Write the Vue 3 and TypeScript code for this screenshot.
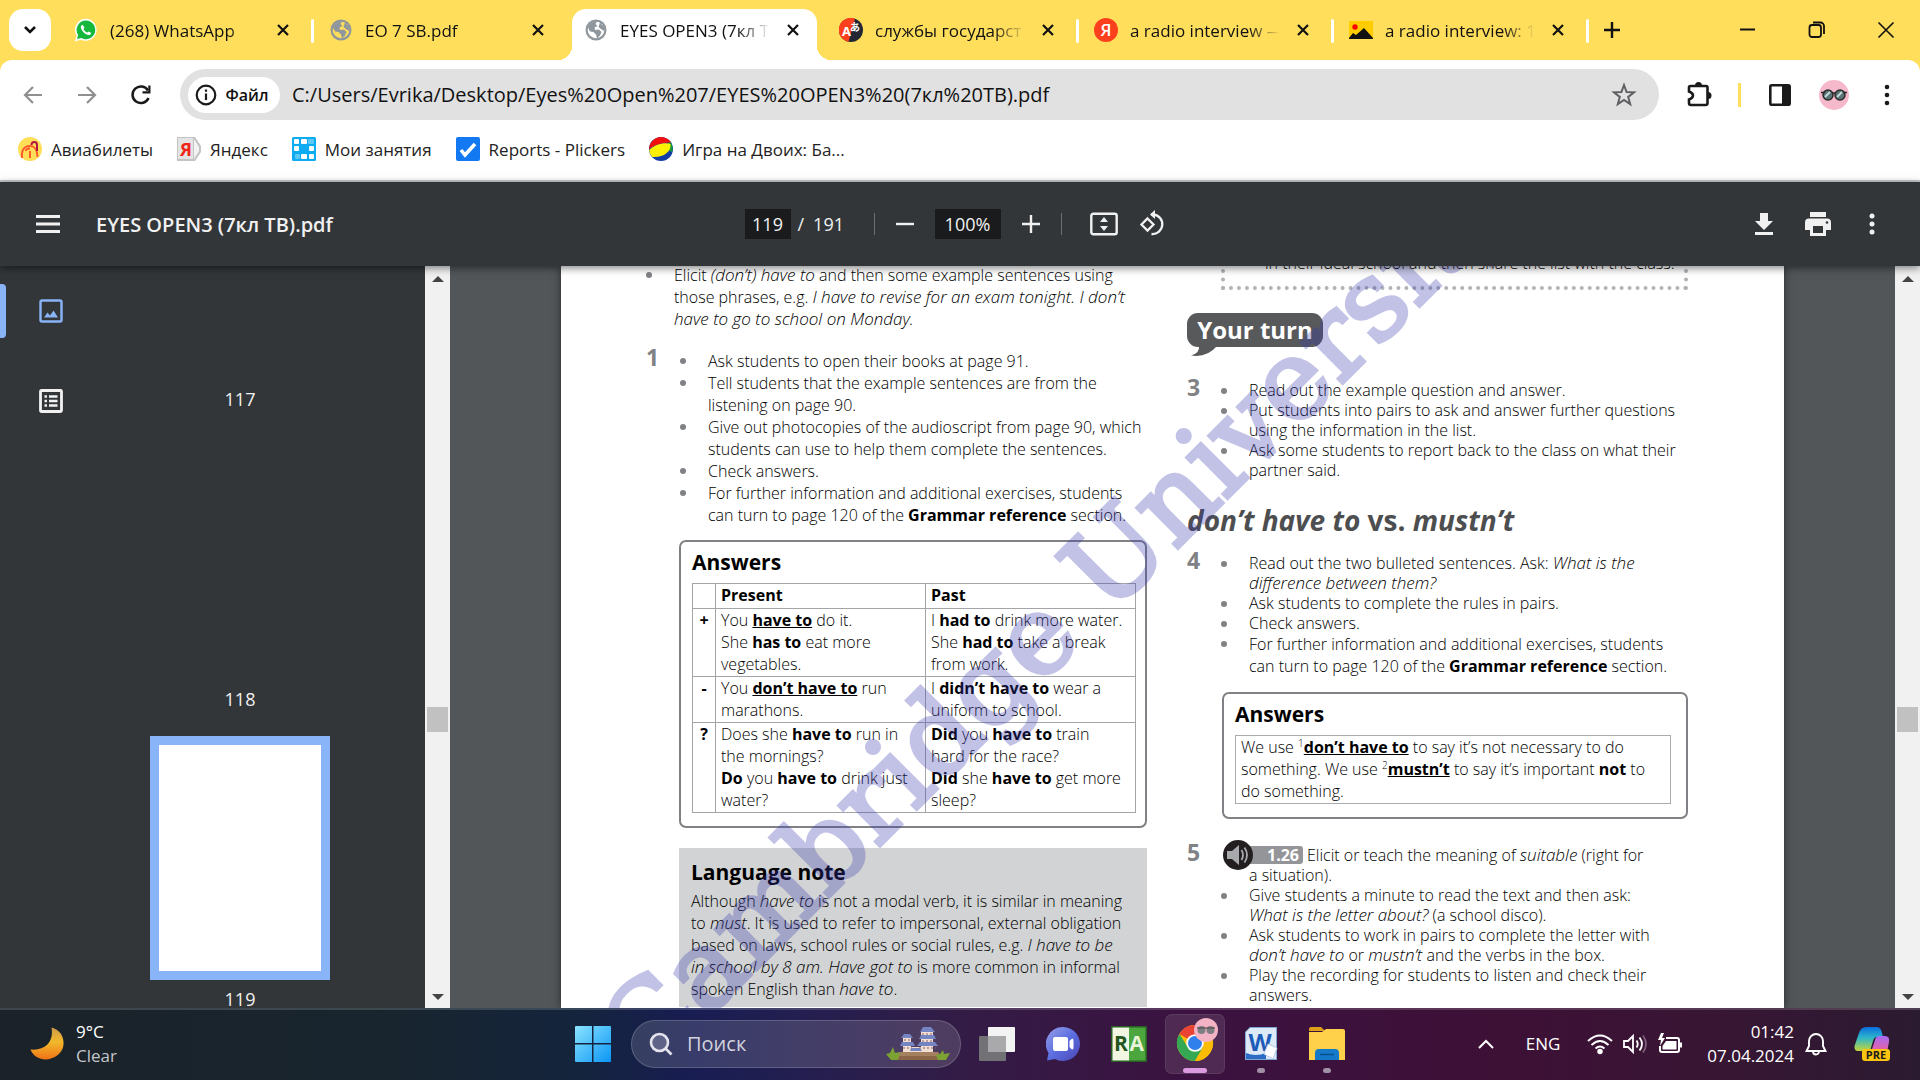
<script setup lang="ts">
import { ref } from 'vue'

interface Tab {
  icon: string
  title: string
  active?: boolean
  divider?: boolean
}

interface Bookmark {
  icon: string
  label: string
}

const tabs: Tab[] = [
  { icon: 'whatsapp', title: '(268) WhatsApp', divider: true },
  { icon: 'globe', title: 'EO 7 SB.pdf' },
  { icon: 'globe', title: 'EYES OPEN3 (7кл Т', active: true },
  { icon: 'translate', title: 'службы государст', divider: true },
  { icon: 'yandex', title: 'a radio interview —', divider: true },
  { icon: 'picture', title: 'a radio interview: 1', divider: true },
]

const bookmarks: Bookmark[] = [
  { icon: 'avia', label: 'Авиабилеты' },
  { icon: 'ya', label: 'Яндекс' },
  { icon: 'lessons', label: 'Мои занятия' },
  { icon: 'plickers', label: 'Reports - Plickers' },
  { icon: 'ball', label: 'Игра на Двоих: Ба...' },
]

const thumbs = [
  { page: 118, selected: false },
  { page: 119, selected: true },
]

const url = ref('C:/Users/Evrika/Desktop/Eyes%20Open%207/EYES%20OPEN3%20(7кл%20ТВ).pdf')
const pageNumber = ref('119')
const zoomLevel = ref('100%')
const query = ref('')
</script>

<template>
  <div class="screen">
    <header class="tabstrip">
      <button class="tab-search" aria-label="Search tabs">
        <svg width="14" height="10" viewBox="0 0 14 10"><path d="M2 2l5 5 5-5" fill="none" stroke="#111" stroke-width="2.6" /></svg>
      </button>
      <div v-for="(tab, i) in tabs" :key="i" class="tab" :class="{ active: tab.active, divider: tab.divider }">
        <svg v-if="tab.icon === 'whatsapp'" class="fav" viewBox="0 0 24 24">
          <path d="M12 .8A11 11 0 0 0 2.600 17.600L.8 23.400l6-1.700A11 11 0 1 0 12 .8z" fill="#fff" />
          <path d="M12 2.600a9.300 9.300 0 0 0-7.800 14.400L3 21l4.200-1.100A9.300 9.300 0 1 0 12 2.600z" fill="#16b83c" />
          <path d="M8.600 6.800c-1.600.5-2.200 2-1.500 3.800 1 2.800 3.300 5.200 6.200 6.200 1.900.6 3.600-.1 3.900-1.900l-2.600-1.500-1.300 1.200c-1.700-.7-3-2-3.800-3.700l1-1.300z" fill="#fff" />
        </svg>
        <svg v-else-if="tab.icon === 'globe'" class="fav" viewBox="0 0 24 24">
          <circle cx="12" cy="12" r="10.500" fill="#8f969c" />
          <circle cx="12" cy="12" r="8.300" :fill="tab.active ? '#fff' : '#ffde5c'" />
          <path d="M4 9.500C5 5.500 9 3 13 3.500l-1.500 2.500 2 2-3 1.500.5 2.500 4-.5 2.500 2.500-1.500 3.500-3 3-1-4-2.500-2.500-3.500-.5z" fill="#8f969c" />
          <path d="M16 4.500l4 4.500v4l-3-2-2.500-2z" fill="#8f969c" />
        </svg>
        <svg v-else-if="tab.icon === 'translate'" class="fav" viewBox="0 0 24 24">
          <circle cx="12" cy="12" r="12" fill="#222733" />
          <path d="M16 .7A12 12 0 1 0 9.500 23.700z" fill="#fc3f1d" />
          <text x="3" y="18" font-size="13" font-weight="700" fill="#fff">A</text>
          <text class="cjk" x="11" y="13" font-size="10" font-weight="700" fill="#fff">あ</text>
        </svg>
        <svg v-else-if="tab.icon === 'yandex'" class="fav" viewBox="0 0 24 24">
          <circle cx="12" cy="12" r="12" fill="#fc3f1d" />
          <text x="12" y="18" font-size="17" font-weight="600" text-anchor="middle" fill="#fff">Я</text>
        </svg>
        <svg v-else class="fav" viewBox="0 0 24 24">
          <path d="M0 3h24v18H0z" fill="#fc0" />
          <circle cx="6" cy="9" r="2.700" fill="#f00" />
          <path d="M0 21v-1l4-5 3 2 8-7 9 10v1z" fill="#111" />
        </svg>
        <button class="tab-title">{{ tab.title }}</button>
        <button class="tab-close" aria-label="Close tab">
          <svg width="14" height="14" viewBox="0 0 14 14"><path d="M2 2l10 10M12 2L2 12" stroke="#111" stroke-width="2.200" /></svg>
        </button>
      </div>
      <button class="new-tab" aria-label="New tab">
        <svg width="16" height="16" viewBox="0 0 16 16"><path d="M8 0v16M0 8h16" stroke="#111" stroke-width="2.400" /></svg>
      </button>
      <div class="window-controls">
        <button aria-label="Minimize"><svg width="18" height="18" viewBox="0 0 18 18"><path d="M1 8.500h15" stroke="#111" stroke-width="2" /></svg></button>
        <button aria-label="Restore">
          <svg width="18" height="18" viewBox="0 0 18 18" fill="none" stroke="#111" stroke-width="1.800"><rect x="1.500" y="4" width="11.500" height="12" rx="2.500" /><path d="M5 1.500h7.500a3.500 3.500 0 0 1 3.500 3.500v8" /></svg>
        </button>
        <button aria-label="Close"><svg width="18" height="18" viewBox="0 0 18 18"><path d="M1.500 1.500l15 15M16.500 1.500l-15 15" stroke="#111" stroke-width="1.600" /></svg></button>
      </div>
    </header>

    <div class="toolbar-wrap">
      <div class="toolbar">
        <nav class="nav-buttons">
          <button aria-label="Back"><svg width="20" height="20" viewBox="0 0 20 20" fill="none" stroke="#8f8f8f" stroke-width="2.200"><path d="M19 10H2M10 2l-8 8 8 8" /></svg></button>
          <button aria-label="Forward"><svg width="20" height="20" viewBox="0 0 20 20" fill="none" stroke="#8f8f8f" stroke-width="2.200"><path d="M1 10h17M10 2l8 8-8 8" /></svg></button>
          <button aria-label="Reload">
            <svg width="22" height="22" viewBox="0 0 22 22"><path d="M18.500 14A8.300 8.300 0 1 1 18 6.500" fill="none" stroke="#1a1a1a" stroke-width="2.500" /><path d="M20.500 1.500v8h-8V7.200h5.800V1.500z" fill="#1a1a1a" /></svg>
          </button>
        </nav>
        <div class="omnibox">
          <button class="chip">
            <svg width="22" height="22" viewBox="0 0 22 22"><circle cx="11" cy="11" r="9.300" fill="none" stroke="#1a1a1a" stroke-width="2.200" /><path d="M11 9.500v6.500M11 5.500v2.200" stroke="#1a1a1a" stroke-width="2.200" /></svg>
            Файл
          </button>
          <input v-model="url" class="url" type="text" aria-label="Address" />
          <button class="star" aria-label="Bookmark this page">
            <svg width="26" height="26" viewBox="0 0 26 26"><path d="M13 3l2.600 7 7.400.3-5.800 4.600 2 7.200L13 18l-6.200 4.100 2-7.200L3 10.300l7.400-.3z" fill="none" stroke="#5f6063" stroke-width="2" /></svg>
          </button>
        </div>
        <div class="tools">
          <button class="ext" aria-label="Extensions">
            <svg width="28" height="28" viewBox="0 0 28 28"><path d="M4 6.500Q4 5 5.500 5H21Q22.500 5 22.500 6.500V22Q22.500 24 20.500 24H6Q4 24 4 22V18.500Q8 17 8 14.500T4 10.500z" fill="none" stroke="#1a1a1a" stroke-width="2.600" /><path d="M10 4.500a3.500 3.500 0 0 1 7 0zM23 11a3.500 3.500 0 0 1 0 7z" fill="#1a1a1a" /></svg>
          </button>
          <span class="tool-divider"></span>
          <button class="panel" aria-label="Side panel">
            <svg width="22" height="22" viewBox="0 0 22 22"><rect x="1.300" y="1.300" width="19.400" height="19.400" rx="1.500" fill="none" stroke="#1a1a1a" stroke-width="2.600" /><path d="M13 1h8v20h-8z" fill="#1a1a1a" /></svg>
          </button>
          <button class="profile" aria-label="Profile">
            <svg width="30" height="30" viewBox="0 0 30 30"><circle cx="15" cy="15" r="15" fill="#f6b8cb" /><g fill="#5c7478" stroke="#2a2a2a" stroke-width="1.500"><circle cx="9" cy="15" r="5" /><circle cx="21" cy="15" r="5" /></g><path d="M2 12.500h4M24 12.500h4M13 13h4" stroke="#2a2a2a" stroke-width="1.500" /><path d="M6 17l5-5M18 17l5-5" stroke="#c6dcda" stroke-width="1.800" /></svg>
          </button>
          <button class="more" aria-label="Menu">
            <svg width="6" height="22" viewBox="0 0 6 22" fill="#1a1a1a"><circle cx="3" cy="3" r="2.300" /><circle cx="3" cy="11" r="2.300" /><circle cx="3" cy="19" r="2.300" /></svg>
          </button>
        </div>
      </div>
      <nav class="bookmarks">
        <a v-for="b in bookmarks" :key="b.label" href="#">
          <svg v-if="b.icon === 'avia'" viewBox="0 0 24 24"><ellipse cx="12" cy="12" rx="12" ry="12" fill="#ffdf57" /><path d="M4 21c-1-9 3-12 8-12s7 3 7.500 11M12 21v-7M8 14c0-2 1-2.500 4-2.500" fill="none" stroke="#ff5a2b" stroke-width="2" /><path d="M13.500 8c0-4 5.500-4 5.500 0v6" fill="none" stroke="#b31245" stroke-width="2" /></svg>
          <svg v-else-if="b.icon === 'ya'" viewBox="0 0 24 24"><path d="M0 0h18l6 9v6l-6 9H0z" fill="#c4c4c4" /><path d="M1 1h15v21H1z" fill="#e4e4e4" /><path d="M17 2l5 8v4l-5 8z" fill="#f3f3f3" /><text x="9" y="19" font-size="18" font-weight="700" text-anchor="middle" fill="#f0251a">Я</text></svg>
          <svg v-else-if="b.icon === 'lessons'" viewBox="0 0 24 24"><rect width="24" height="24" rx="1.500" fill="#0cabf2" /><g fill="#fff"><rect x="2" y="2" width="5" height="5" rx="1" /><rect x="9" y="2" width="6" height="5" rx="1" /><rect x="16" y="2" width="6" height="5" rx="1" fill="#5cc8f7" /><rect x="9" y="9" width="6" height="5" rx="1" fill="#0cabf2" /><rect x="2" y="9" width="5" height="5" rx="1" /><rect x="17" y="9" width="5" height="5" rx="1" /><rect x="3" y="17" width="5" height="5" rx="1" fill="#5cc8f7" /><rect x="9" y="17" width="6" height="5" rx="1" /><rect x="17" y="17" width="5" height="5" rx="1" /></g></svg>
          <svg v-else-if="b.icon === 'plickers'" viewBox="0 0 24 24"><rect width="24" height="24" rx="2" fill="#1279f2" /><path d="M5 13l4 5 10-11" fill="none" stroke="#fff" stroke-width="3.600" /></svg>
          <svg v-else viewBox="0 0 24 24"><circle cx="12" cy="12" r="12" fill="#113fa5" /><path d="M21 4a12 12 0 0 1 2 11l-8-4z" fill="#159a3c" /><path d="M0 12A12 12 0 0 1 22 5.500C14 5 5 8 0 12z" fill="#f50e0e" /><path d="M.2 13C5 8 15 5 21.500 7c1 8-8 14-18 13C1.500 18 .5 16 .2 13z" fill="#ffef00" /></svg>
          {{ b.label }}
        </a>
      </nav>
    </div>

    <section class="pdf-bar">
      <div class="pdf-left">
        <button aria-label="Menu"><svg width="24" height="18" viewBox="0 0 24 18"><path d="M0 1.500h24M0 9h24M0 16.500h24" stroke="#f1f1f1" stroke-width="3" /></svg></button>
        <h1>EYES OPEN3 (7кл ТВ).pdf</h1>
      </div>
      <div class="pdf-mid">
        <input v-model="pageNumber" class="box page-no" type="text" aria-label="Page number" />
        <span class="total"><span>/</span><span>191</span></span>
        <span class="bar-divider first"></span>
        <button class="minus" aria-label="Zoom out"><svg width="18" height="18" viewBox="0 0 18 18"><path d="M0 9h18" stroke="#f1f1f1" stroke-width="2.400" /></svg></button>
        <input v-model="zoomLevel" class="box zoom" type="text" aria-label="Zoom level" />
        <button class="plus" aria-label="Zoom in"><svg width="18" height="18" viewBox="0 0 18 18"><path d="M0 9h18M9 0v18" stroke="#f1f1f1" stroke-width="2.400" /></svg></button>
        <span class="bar-divider"></span>
        <button class="fit" aria-label="Fit to page">
          <svg width="28" height="24" viewBox="0 0 28 24"><rect x="1.300" y="1.800" width="25.400" height="20.400" rx="2" fill="none" stroke="#f1f1f1" stroke-width="2.400" /><path d="M14 5l4 5h-8zM14 19l4-5h-8z" fill="#f1f1f1" /></svg>
        </button>
        <button aria-label="Rotate">
          <svg width="28" height="28" viewBox="0 0 28 28" fill="none" stroke="#f1f1f1" stroke-width="2.300"><path d="M8.500 8.500l6 6-6 6-6-6z" /><path d="M12 4.500h2.500a9.800 9.800 0 1 1-2 19.500" /><path d="M16 0v9l-5-4.500z" fill="#f1f1f1" stroke="none" /></svg>
        </button>
      </div>
      <div class="pdf-right">
        <button aria-label="Download"><svg width="20" height="24" viewBox="0 0 20 24" fill="#f1f1f1"><path d="M6 1h8v8h5l-9 9-9-9h5zM1 20h18v3H1z" /></svg></button>
        <button aria-label="Print"><svg width="26" height="24" viewBox="0 0 26 24"><path d="M5 0h16v5H5zM4 6.500h18a4 4 0 0 1 4 4V18h-5v6H5v-6H0v-7.500a4 4 0 0 1 4-4z" fill="#f1f1f1" /><path d="M8 14h10v7H8z" fill="#323639" /><circle cx="22" cy="10.500" r="1.300" fill="#323639" /></svg></button>
        <button aria-label="More"><svg width="6" height="22" viewBox="0 0 6 22" fill="#f1f1f1"><circle cx="3" cy="3" r="2.500" /><circle cx="3" cy="11" r="2.500" /><circle cx="3" cy="19" r="2.500" /></svg></button>
      </div>
    </section>

    <main class="viewer">
      <aside class="sidebar">
        <div class="rail">
          <button class="rail-item selected" aria-label="Thumbnails">
            <svg width="24" height="24" viewBox="0 0 24 24"><rect x="1.500" y="1.500" width="21" height="21" rx="1.500" fill="none" stroke="#8ab4f8" stroke-width="2.400" /><path d="M5 18.500l3.500-5 2.500 3 3.500-5 4.500 7z" fill="#8ab4f8" /></svg>
          </button>
          <button class="rail-item" aria-label="Document outline">
            <svg width="24" height="24" viewBox="0 0 24 24"><rect x="1.500" y="1.500" width="21" height="21" rx="1" fill="none" stroke="#f1f1f1" stroke-width="2.800" /><path d="M5.500 7.500H8M10 7.500h8.500M5.500 12H8M10 12h8.500M5.500 16.500H8M10 16.500h8.500" stroke="#f1f1f1" stroke-width="2.300" /></svg>
          </button>
        </div>
        <div class="thumbs">
          <span class="thumb-label">117</span>
          <figure v-for="t in thumbs" :key="t.page">
            <div class="thumb" :class="{ selected: t.selected }"></div>
            <figcaption class="thumb-label">{{ t.page }}</figcaption>
          </figure>
        </div>
        <div class="scrollbar"><i class="up"></i><i class="handle"></i><i class="down"></i></div>
      </aside>

      <div class="canvas">
        <article class="page">
          <div class="column">
            <ul class="intro">
              <li><span>Elicit <em>(don’t) have to</em> and then some example sentences using<br />those phrases, e.g. <em>I have to revise for an exam tonight. I don’t<br />have to go to school on Monday.</em></span></li>
            </ul>
            <section class="task">
              <b class="num">1</b>
              <ul>
                <li><span>Ask students to open their books at page 91.</span></li>
                <li><span>Tell students that the example sentences are from the<br />listening on page 90.</span></li>
                <li><span>Give out photocopies of the audioscript from page 90, which<br />students can use to help them complete the sentences.</span></li>
                <li><span>Check answers.</span></li>
                <li><span>For further information and additional exercises, students<br />can turn to page 120 of the <b>Grammar reference</b> section.</span></li>
              </ul>
            </section>
            <section class="answers left">
              <h3>Answers</h3>
              <table>
                <thead>
                  <tr><th></th><th>Present</th><th>Past</th></tr>
                </thead>
                <tbody>
                  <tr>
                    <th>+</th>
                    <td>You <u>have to</u> do it.<br />She <b>has to</b> eat more<br />vegetables.</td>
                    <td>I <b>had to</b> drink more water.<br />She <b>had to</b> take a break<br />from work.</td>
                  </tr>
                  <tr>
                    <th>-</th>
                    <td>You <u>don’t have to</u> run<br />marathons.</td>
                    <td>I <b>didn’t have to</b> wear a<br />uniform to school.</td>
                  </tr>
                  <tr>
                    <th>?</th>
                    <td>Does she <b>have to</b> run in<br />the mornings?<br /><b>Do</b> you <b>have to</b> drink just<br />water?</td>
                    <td><b>Did</b> you <b>have to</b> train<br />hard for the race?<br /><b>Did</b> she <b>have to</b> get more<br />sleep?</td>
                  </tr>
                </tbody>
              </table>
            </section>
            <section class="note">
              <h3>Language note</h3>
              <p>Although <em>have to</em> is not a modal verb, it is similar in meaning<br />to <em>must</em>. It is used to refer to impersonal, external obligation<br />based on laws, school rules or social rules, e.g. <em>I have to be<br />in school by 8 am. Have got to</em> is more common in informal<br />spoken English than <em>have to</em>.</p>
            </section>
          </div>

          <div class="column second">
            <p class="dotted">in their ideal school and then share the list with the class.</p>
            <div class="bubble">
              <h2>Your turn</h2>
              <svg class="tail" width="26" height="12" viewBox="0 0 26 12"><path d="M8 0h18Q16 12 0 9.500Q9 7 8 0z" fill="#58595b" /></svg>
            </div>
            <section class="task tight">
              <b class="num">3</b>
              <ul>
                <li><span>Read out the example question and answer.</span></li>
                <li><span>Put students into pairs to ask and answer further questions<br />using the information in the list.</span></li>
                <li><span>Ask some students to report back to the class on what their<br />partner said.</span></li>
              </ul>
            </section>
            <h2 class="topic"><em>don’t have to</em> vs. <em>mustn’t</em></h2>
            <section class="task tight">
              <b class="num">4</b>
              <ul>
                <li><span>Read out the two bulleted sentences. Ask: <em>What is the<br />difference between them?</em></span></li>
                <li><span>Ask students to complete the rules in pairs.</span></li>
                <li><span>Check answers.</span></li>
                <li class="loose"><span>For further information and additional exercises, students<br />can turn to page 120 of the <b>Grammar reference</b> section.</span></li>
              </ul>
            </section>
            <section class="answers right">
              <h3>Answers</h3>
              <p>We use <sup>1</sup><u>don’t have to</u> to say it’s not necessary to do<br />something. We use <sup>2</sup><u>mustn’t</u> to say it’s important <b>not</b> to<br />do something.</p>
            </section>
            <section class="task tight">
              <b class="num">5</b>
              <ul>
                <li class="audio">
                  <span class="track">
                    <svg width="30" height="30" viewBox="0 0 30 30"><circle cx="15" cy="15" r="15" fill="#231f20" /><path d="M4 11h5l7-6v20l-7-6H4z" fill="#a7a9ac" /><path d="M18.500 10q3 5 0 10M21.500 7.500q5 7.500 0 15" fill="none" stroke="#a7a9ac" stroke-width="1.800" /></svg>
                    <b>1.26</b>
                  </span>
                  <span>Elicit or teach the meaning of <em>suitable</em> (right for</span>
                </li>
                <li class="plain"><span>a situation).</span></li>
                <li><span>Give students a minute to read the text and then ask:<br /><em>What is the letter about?</em> (a school disco).</span></li>
                <li><span>Ask students to work in pairs to complete the letter with<br /><em>don’t have to</em> or <em>mustn’t</em> and the verbs in the box.</span></li>
                <li><span>Play the recording for students to listen and check their<br />answers.</span></li>
              </ul>
            </section>
          </div>
          <div class="watermark">Cambridge University</div>
        </article>
      </div>
      <div class="scrollbar"><i class="up"></i><i class="handle"></i><i class="down"></i></div>
    </main>

    <footer class="taskbar">
      <div class="weather">
        <svg width="36" height="36" viewBox="0 0 36 36"><defs><linearGradient id="moon" x1="0" y1="0" x2="0" y2="1"><stop offset="0" stop-color="#cf9a4a" /><stop offset=".45" stop-color="#f2b92c" /><stop offset="1" stop-color="#ef7316" /></linearGradient></defs><path d="M22.500 1.500C31 4 35 10 34.500 18.500c-.8 15-26 22-33 5C17 25 25 15 22.500 1.500z" fill="url(#moon)" /></svg>
        <p>9°C<br /><span>Clear</span></p>
      </div>
      <div class="apps">
        <button class="app" aria-label="Start">
          <svg width="36" height="36" viewBox="0 0 36 36"><defs><linearGradient id="win" x1="0" y1="0" x2="1" y2="1"><stop offset="0" stop-color="#8be4ff" /><stop offset="1" stop-color="#0a95f5" /></linearGradient></defs><path d="M0 1q0-1 1-1h16v17H0zM18.500 0H35q1 0 1 1v16H18.500zM0 18.500h17V36H1q-1 0-1-1zM18.500 18.500H36V35q0 1-1 1H18.500z" fill="url(#win)" /></svg>
        </button>
        <div class="search">
          <svg width="24" height="24" viewBox="0 0 24 24" fill="none" stroke="#e4e4ee" stroke-width="2.600"><circle cx="10.500" cy="10.500" r="8.500" fill="#5f6388" /><path d="M16.500 16.500l6 6" /></svg>
          <input v-model="query" type="text" placeholder="Поиск" aria-label="Поиск" />
          <svg class="castle" width="64" height="36" viewBox="0 0 64 36">
            <path d="M14 26h38l5 8H10z" fill="#a5805f" /><path d="M12 30h44l1 4H11z" fill="#8b6548" />
            <path d="M17 12h8v14h-8zM35 6h12v20H35zM25 21h12v5H25z" fill="#f1dfd3" />
            <path d="M18 8h6l3 4H15zM16 16h11l2 4H14zM37 1h8l4 5H34zM35 9h13l2 4H33zM34 16h15l3 4H31zM25 22h9l2 3H24z" fill="#7584c2" />
            <path d="M18 14h7M36 8h11M36 15h12M17 22h9M33 22h17" stroke="#8a5f69" stroke-dasharray="2 2" />
            <path d="M0 28l4-1 3-6 2 6 5-1-2 8H5zM50 29l4-1 3-4 1 4 6-1-4 7h-8z" fill="#7ba232" />
          </svg>
        </div>
        <button class="app" aria-label="Task view">
          <svg width="36" height="34" viewBox="0 0 36 34"><rect x="9" width="27" height="25" rx="1" fill="#f3f3f3" /><rect y="9" width="27" height="25" rx="1" fill="#727176" /><path d="M9 9h18v16H9z" fill="#a9a9ab" /></svg>
        </button>
        <button class="app" aria-label="Chat">
          <svg width="34" height="34" viewBox="0 0 34 34"><defs><linearGradient id="chat" x1="0" y1="0" x2="1" y2="1"><stop offset="0" stop-color="#9a9fe8" /><stop offset=".5" stop-color="#5b6fe0" /><stop offset="1" stop-color="#4b45b5" /></linearGradient></defs><path d="M17 0a17 17 0 1 1-8 32L1 33.500 2.500 26A17 17 0 0 1 17 0z" fill="url(#chat)" /><rect x="7" y="10" width="15" height="14" rx="2" fill="#fff" /><path d="M23.500 14q4-5 4 0v6q0 5-4 0z" fill="#fff" /></svg>
        </button>
        <button class="app" aria-label="RA">
          <svg width="36" height="36" viewBox="0 0 36 36"><rect width="36" height="36" fill="#285f22" /><path d="M1.500 1.500H18v33H1.500z" fill="#f1f6e2" /><path d="M18 1.500h16.500v33H18z" fill="#4aa63d" /><text x="3" y="25" font-size="21" font-weight="700" fill="#24561f">R</text><text x="18.500" y="25" font-size="21" font-weight="700" fill="#e9f3d8">A</text></svg>
        </button>
        <button class="app current" aria-label="Chrome">
          <svg width="42" height="46" viewBox="0 0 42 46">
            <circle cx="19" cy="26" r="18" fill="#fbbc05" /><path d="M19 26L3.400 17A18 18 0 0 1 34.600 17z" fill="#ea4335" /><path d="M3.400 17A18 18 0 0 0 19 44l8-13.500-8-4.500-8 3z" fill="#34a853" /><path d="M19 17h15.600A18 18 0 0 1 19 44l8-14z" fill="#fbbc05" />
            <circle cx="19" cy="26" r="8.800" fill="#fff" /><circle cx="19" cy="26" r="7" fill="#2f80ed" />
            <circle cx="30" cy="13" r="12" fill="#f3b3c4" /><circle cx="25.500" cy="13" r="4" fill="#7d7f84" /><circle cx="34.500" cy="13" r="4" fill="#7d7f84" /><path d="M21 11h18" stroke="#5b4b50" stroke-width="1.200" />
          </svg>
        </button>
        <button class="app running" aria-label="Word">
          <svg width="34" height="34" viewBox="0 0 34 34"><path d="M6 0h27v33H1V5z" fill="#7fa6d6" /><path d="M6 1h26v31H2V5z" fill="#dce9f7" /><path d="M2 26q10 4 20 0v6H2z" fill="#2b6cc4" /><text x="16" y="24" font-size="24" font-weight="700" text-anchor="middle" fill="#1c5cb8">W</text><path d="M24 17l9 4-4 11-9-5z" fill="#fff" stroke="#b8cde6" /></svg>
        </button>
        <button class="app running" aria-label="Explorer">
          <svg width="36" height="34" viewBox="0 0 36 34"><path d="M0 2q0-2 2-2h10l4 4H0z" fill="#dca11b" /><path d="M0 5h13l4-3h17q2 0 2 2v29H0z" fill="#ffd04a" /><path d="M6 33V26q0-4 4-4h16q4 0 4 4v7z" fill="#1479c9" /><path d="M11 27.500h14" stroke="#0b4f8c" stroke-width="1.500" /></svg>
        </button>
      </div>
      <div class="tray">
        <button class="chev" aria-label="Hidden icons"><svg width="16" height="10" viewBox="0 0 16 10"><path d="M1 9l7-7 7 7" fill="none" stroke="#fff" stroke-width="2" /></svg></button>
        <span class="lang">ENG</span>
        <div class="status">
          <svg width="26" height="22" viewBox="0 0 26 22" fill="none" stroke="#fff" stroke-width="1.900"><path d="M1 8Q13-3 25 8M4.500 12q8.500-8 17 0M8.500 15.500q4.500-4 9 0" /><circle cx="13" cy="18.500" r="1.800" fill="#fff" /></svg>
          <svg width="24" height="22" viewBox="0 0 24 22" fill="none" stroke="#fff" stroke-width="1.800"><path d="M1 8h4l5-5v16l-5-5H1zM13.500 7.500q2.500 3.500 0 7M16.500 4.500q5 6.500 0 13" /><path d="M20 2.500q6 8.500 0 17" stroke="#7b5b7a" /></svg>
          <svg width="26" height="22" viewBox="0 0 26 22"><path d="M9 5h11q2 0 2 2v10q0 2-2 2H5q-2 0-2-2v-4" fill="none" stroke="#fff" stroke-width="2" /><path d="M9 8h10.500v8.500h-14V13z" fill="#fff" /><path d="M23 9.500h2v5h-2zM4 0L1 7h3l-1 6 5-8H5l2-5z" fill="#fff" /></svg>
        </div>
        <p class="clock">01:42<br />07.04.2024</p>
        <svg class="bell" width="22" height="24" viewBox="0 0 22 24" fill="none" stroke="#fff" stroke-width="1.900"><path d="M11 2a7 7 0 0 0-7 7v5l-2.500 5h19L18 14V9a7 7 0 0 0-7-7zM8 19.500a3 3 0 0 0 6 0" /></svg>
        <button class="copilot" aria-label="Copilot">
          <svg width="36" height="36" viewBox="0 0 36 36"><defs><linearGradient id="cpa" x1="0" y1="0" x2="0" y2="1"><stop offset="0" stop-color="#0c6fe0" /><stop offset=".45" stop-color="#2db6c9" /><stop offset="1" stop-color="#c4d63a" /></linearGradient><linearGradient id="cpb" x1="0" y1="0" x2="0" y2="1"><stop offset="0" stop-color="#a66cf5" /><stop offset="1" stop-color="#f0609a" /></linearGradient></defs><path d="M12 1h11q4 0 5 6l1 4h-6q-3 0-4 4l-3 10H4q-4 0-3.500-5L5 7q2-6 7-6z" fill="url(#cpa)" /><path d="M26 10h5q5 0 4 6l-2 10H17l4-12q1-4 5-4z" fill="url(#cpb)" /><rect x="8" y="23" width="28" height="12" rx="3" fill="#fcc40e" /><text x="22" y="33" font-size="11" font-weight="700" text-anchor="middle" fill="#1a1a1a">PRE</text></svg>
        </button>
      </div>
    </footer>
  </div>
</template>

<style>
body {
  background: #525659;
}
</style>

<style scoped>
* {
  box-sizing: border-box;
}
.screen {
  display: flex;
  flex-direction: column;
  height: 100vh;
  overflow: hidden;
  font-family: 'Open Sans', 'Noto Sans', sans-serif;
  color: #111;
}
button {
  display: flex;
  align-items: center;
  justify-content: center;
  flex: none;
  padding: 0;
  border: 0;
  background: none;
  font: inherit;
  color: inherit;
}
input {
  border: 0;
  padding: 0;
  background: none;
  font: inherit;
  color: inherit;
  outline: 0;
  min-width: 0;
}
svg {
  flex: none;
  display: block;
}
h1, h2, h3, p, ul, figure {
  margin: 0;
  padding: 0;
}
.cjk {
  font-family: 'Noto Sans CJK JP', sans-serif;
}

/* Tab strip */
.tabstrip {
  position: relative;
  z-index: 1;
  display: flex;
  flex: none;
  height: 60px;
  background: #ffde5c;
}
.tab-search {
  width: 42px;
  height: 42px;
  margin: 9px 6px 0 9px;
  border-radius: 14px;
  background: #fff;
}
.tab {
  position: relative;
  display: flex;
  align-items: center;
  width: 255px;
  height: 60px;
  padding-left: 17px;
}
.tab.divider::after {
  content: '';
  position: absolute;
  right: -2px;
  top: 19px;
  width: 3px;
  height: 24px;
  border-radius: 2px;
  background: #fff;
}
.tab.active {
  width: 245px;
  height: 51px;
  margin: 9px 5px 0;
  padding: 0 0 9px 12px;
  border-radius: 14px 14px 0 0;
  background: #fff;
}
.tab.active::before,
.tab.active::after {
  content: '';
  position: absolute;
  bottom: 0;
  width: 14px;
  height: 14px;
}
.tab.active::before {
  left: -14px;
  background: radial-gradient(circle at 0 0, transparent 14px, #fff 14px);
}
.tab.active::after {
  right: -14px;
  background: radial-gradient(circle at 100% 0, transparent 14px, #fff 14px);
}
.fav {
  width: 24px;
  height: 24px;
  margin-right: 12px;
}
.tab-title {
  justify-content: flex-start;
  width: 148px;
  padding-top: 2px;
  white-space: nowrap;
  font-size: 17px;
  line-height: 24px;
  -webkit-mask-image: linear-gradient(90deg, #000 118px, transparent 150px);
  mask-image: linear-gradient(90deg, #000 118px, transparent 150px);
}
.tab-close {
  width: 24px;
  height: 24px;
  margin-left: 13px;
}
.new-tab {
  width: 50px;
}
.window-controls {
  display: flex;
  margin-left: auto;
}
.window-controls button {
  width: 69px;
}

/* Toolbar */
.toolbar-wrap {
  flex: none;
  height: 122px;
  border-radius: 12px 12px 0 0;
  border-bottom: 2px solid #c9cbcc;
  background: #fff;
  box-shadow: 0 -12px 0 #ffde5c;
}
.toolbar {
  display: flex;
  align-items: center;
  height: 69px;
  padding-right: 3px;
}
.nav-buttons {
  display: flex;
  padding-left: 6px;
}
.nav-buttons button {
  width: 54px;
  height: 54px;
}
.omnibox {
  display: flex;
  align-items: center;
  flex: 1;
  height: 51px;
  margin-left: 12px;
  padding: 0 22px 0 8px;
  border-radius: 26px;
  background: #e1e1e1;
}
.chip {
  gap: 8px;
  width: 92px;
  height: 36px;
  padding-right: 4px;
  border-radius: 18px;
  background: #fff;
  font-size: 16px;
  font-weight: 600;
}
.url {
  flex: 1;
  margin-left: 12px;
  font-size: 20px;
}
.tools {
  display: flex;
  align-items: center;
}
.ext {
  width: 79px;
}
.tool-divider {
  width: 3px;
  height: 24px;
  background: #ffde5c;
}
.panel {
  width: 78px;
}
.profile {
  width: 30px;
}
.more {
  width: 60px;
  margin-left: 8px;
}
.bookmarks {
  display: flex;
  gap: 24px;
  padding: 4px 18px 0;
}
.bookmarks a {
  display: flex;
  align-items: center;
  gap: 9px;
  height: 32px;
  color: #222;
  font-size: 17px;
  text-decoration: none;
  white-space: nowrap;
}
.bookmarks svg {
  width: 24px;
  height: 24px;
}

/* PDF toolbar */
.pdf-bar {
  position: relative;
  z-index: 2;
  display: grid;
  grid-template-columns: 1fr auto 1fr;
  align-items: center;
  flex: none;
  height: 84px;
  background: #323639;
  color: #f1f1f1;
  box-shadow: 0 2px 8px rgba(0, 0, 0, 0.5);
}
.pdf-left {
  display: flex;
  align-items: center;
  gap: 36px;
  padding-left: 36px;
}
.pdf-left h1 {
  padding-top: 2px;
  font-size: 20px;
  font-weight: 600;
  line-height: 28px;
}
.pdf-mid {
  display: flex;
  align-items: center;
  padding-right: 9px;
  font-size: 18px;
}
.box {
  height: 30px;
  background: #191b1c;
  text-align: center;
}
.page-no {
  width: 46px;
}
.total {
  display: flex;
  gap: 9px;
  width: 77px;
  padding-left: 7px;
}
.zoom {
  width: 66px;
}
.bar-divider {
  width: 1px;
  height: 22px;
  margin: 0 15px 0 12px;
  background: #6b6e70;
}
.bar-divider.first {
  margin: 0 12px 0 6px;
}
.minus,
.plus {
  width: 36px;
  height: 30px;
}
.minus {
  margin-right: 12px;
}
.plus {
  margin-left: 12px;
}
.fit {
  width: 54px;
  margin-right: 8px;
}
.pdf-right {
  display: flex;
  align-items: center;
  justify-content: flex-end;
  padding-right: 21px;
}
.pdf-right button {
  width: 54px;
}

/* Viewer */
.viewer {
  display: flex;
  flex: 1;
  min-height: 0;
  overflow: hidden;
  background: #525659;
}
.sidebar {
  display: flex;
  flex: none;
  width: 450px;
  background: #323639;
  color: #f1f1f1;
}
.rail {
  display: flex;
  flex-direction: column;
  gap: 36px;
  width: 102px;
  padding-top: 18px;
}
.rail-item {
  width: 102px;
  height: 54px;
}
.rail-item.selected {
  position: relative;
}
.rail-item.selected::before {
  content: '';
  position: absolute;
  left: 0;
  width: 6px;
  height: 54px;
  border-radius: 0 4px 4px 0;
  background: #8ab4f8;
}
.thumbs {
  display: flex;
  flex: 1;
  flex-direction: column;
  align-items: center;
  gap: 18px;
  padding: 114px 47px 0 0;
  overflow: hidden;
}
.thumb-label {
  display: block;
  flex: none;
  height: 38px;
  font-size: 18px;
  line-height: 38px;
  text-align: center;
}
.thumb {
  width: 180px;
  height: 244px;
}
.thumb.selected {
  border: 9px solid #8ab4f8;
  background: #fff;
}
.scrollbar {
  display: flex;
  flex: none;
  flex-direction: column;
  justify-content: space-between;
  align-items: center;
  width: 25px;
  padding: 10px 0 8px;
  background: #f1f1f1;
}
.up,
.down {
  border: 6px solid transparent;
}
.up {
  border-top: 0;
  border-bottom: 6px solid #444;
}
.down {
  border-bottom: 0;
  border-top: 6px solid #444;
}
.handle {
  width: 21px;
  height: 25px;
  margin-top: 162px;
  background: #c1c1c1;
}
.canvas {
  display: flex;
  flex: 1;
  justify-content: center;
  min-width: 0;
  overflow: hidden;
}

/* Document page */
.page {
  position: relative;
  display: flex;
  gap: 40px;
  flex: 0 1 1223px;
  padding: 0 96px 0 85px;
  overflow: hidden;
  background: #fff;
  color: #000;
  font-size: 16px;
  font-weight: 300;
  line-height: 22px;
  white-space: nowrap;
  box-shadow: 0 0 8px rgba(0, 0, 0, 0.5);
}
.column {
  flex: 1;
  min-width: 0;
  margin-top: -2px;
}
.column.second {
  margin-top: -14px;
}
.page b,
.page u,
.page th {
  font-weight: 700;
}
.page li em,
.page p em {
  font-size: 17px;
  line-height: 16px;
}
.page li {
  display: grid;
  grid-template-columns: 28px auto;
}
.page li::before {
  content: '';
  width: 6px;
  height: 6px;
  margin-top: 8px;
  border-radius: 50%;
  background: #808285;
}
.task {
  display: grid;
  grid-template-columns: 34px auto;
  align-items: start;
}
.task .num {
  color: #808285;
  font-size: 23px;
  line-height: 15px;
}
.intro {
  margin-bottom: 20px;
}
.answers {
  border: 2px solid #808184;
  border-radius: 7px;
}
.answers h3,
.note h3 {
  font-size: 21px;
  font-weight: 700;
}
.answers h3 {
  line-height: 41px;
}
.answers.left {
  margin: 14px 0 0 33px;
  padding: 0 9px 13px 11px;
}
.answers.right {
  margin: 15px 0 26px 35px;
  padding: 0 15px 13px 11px;
}
.answers.right p {
  padding: 0 5px 1px;
  border: 1px solid #a9abae;
}
.page sup {
  font-size: 10px;
  line-height: 10px;
}
table {
  width: 100%;
  border-collapse: collapse;
  table-layout: fixed;
}
th,
td {
  padding: 0 5px 1px;
  border: 1px solid #a3a5a8;
  text-align: left;
  vertical-align: top;
}
thead th {
  padding-bottom: 2px;
}
tr > :first-child {
  width: 23px;
  padding: 0 1px;
  text-align: center;
}
.note {
  margin: 20px 0 0 33px;
  padding: 10px 12px 7px;
  background: #d1d3d4;
}
.note h3 {
  margin-bottom: 4px;
  line-height: 28px;
}
.dotted {
  margin-left: 34px;
  padding: 0 0 12px 40px;
  border: 4px dotted #b1b3b6;
  border-top: 0;
}
.bubble {
  position: relative;
  width: 136px;
  margin: 23px 0 33px;
  border-radius: 11px;
  background: #58595b;
  color: #fff;
  text-align: center;
}
.bubble h2 {
  font-size: 24px;
  font-weight: 700;
  line-height: 34px;
}
.tail {
  position: absolute;
  left: 4px;
  top: 33px;
}
.tight {
  line-height: 20px;
}
.page .loose {
  line-height: 22px;
}
.topic {
  margin: 22px 0 15px;
  color: #4d4e50;
  font-size: 28px;
  font-weight: 700;
  line-height: 36px;
}
.page .audio {
  display: flex;
  align-items: center;
  height: 20px;
}
.page .audio::before {
  display: none;
}
.page .plain::before {
  visibility: hidden;
}
.track {
  display: flex;
  align-items: center;
  margin-left: 2px;
}
.track svg {
  position: relative;
}
.track b {
  width: 54px;
  height: 18px;
  margin: 0 4px 0 -4px;
  padding-right: 4px;
  border-radius: 0 3px 3px 0;
  background: #939598;
  color: #fff;
  line-height: 18px;
  text-align: right;
}
.watermark {
  position: absolute;
  left: 87px;
  top: 719px;
  color: #3a3aaf;
  font-family: 'DejaVu Serif', serif;
  font-size: 110px;
  font-weight: 400;
  line-height: 110px;
  opacity: 0.3;
  transform: rotate(-45deg);
  transform-origin: 0 94px;
  pointer-events: none;
  -webkit-text-stroke: 4px #3a3aaf;
}

/* Taskbar */
.taskbar {
  position: relative;
  z-index: 2;
  display: grid;
  grid-template-columns: 1fr auto 1fr;
  align-items: center;
  flex: none;
  height: 72px;
  border-top: 2px solid rgba(255, 255, 255, 0.16);
  padding-bottom: 2px;
  background: linear-gradient(90deg, #1b2229 0%, #18252e 20%, #14243c 30%, #181d52 36%, #241f50 42%, #331c46 50%, #3b1240 62%, #3d1036 78%, #391534 88%, #2b1b31 100%);
  background-origin: border-box;
  color: #fff;
  font-size: 17px;
  line-height: 24px;
}
.weather {
  display: flex;
  align-items: center;
  gap: 11px;
  padding-left: 29px;
}
.weather span {
  color: #c3c6ca;
}
.apps {
  display: flex;
  align-items: center;
  gap: 6px;
}
.app {
  position: relative;
  width: 60px;
  height: 60px;
  border-radius: 7px;
}
.current {
  border: 1px solid rgba(255, 255, 255, 0.08);
  background: rgba(255, 255, 255, 0.1);
}
.current svg {
  margin: 0 0 8px 4px;
}
.current::after,
.running::after {
  content: '';
  position: absolute;
  bottom: 1px;
  width: 8px;
  height: 5px;
  border-radius: 3px;
  background: #a08fa5;
}
.current::after {
  bottom: 0;
  width: 24px;
  background: #dc9be0;
}
.search {
  display: flex;
  align-items: center;
  width: 330px;
  height: 48px;
  margin-left: 2px;
  padding: 0 10px 0 17px;
  border: 1px solid rgba(255, 255, 255, 0.18);
  border-radius: 24px;
  background: rgba(255, 255, 255, 0.14);
}
.search input {
  flex: 1;
  margin-left: 14px;
  font-size: 20px;
}
.search input::placeholder {
  color: #d3d2de;
  opacity: 1;
}
.tray {
  display: flex;
  align-items: center;
  justify-content: flex-end;
  padding-right: 30px;
}
.chev {
  width: 40px;
}
.lang {
  margin: 0 27px 0 20px;
}
.status {
  display: flex;
  gap: 10px;
}
.clock {
  margin: 0 11px 0 24px;
  text-align: right;
}
.bell {
  margin-right: 27px;
}
</style>
